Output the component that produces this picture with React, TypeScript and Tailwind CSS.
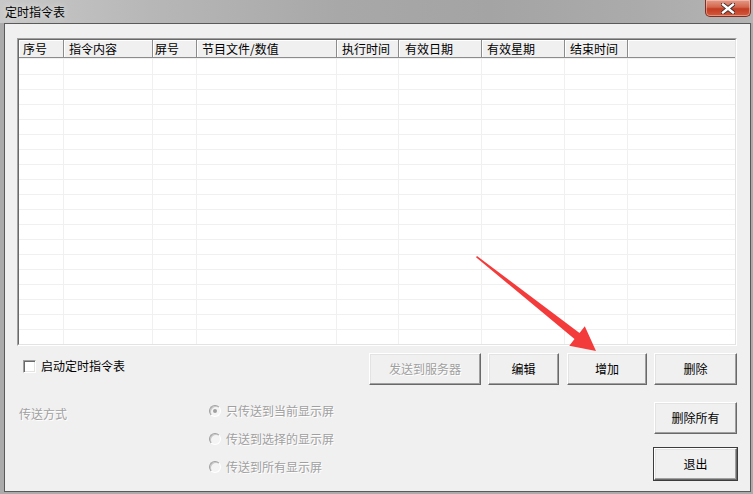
import type { ReactNode } from 'react';

// 定时指令表 dialog (classic Windows style)

const columns = [
  { label: '序号', w: 45, pl: 4 },
  { label: '指令内容', w: 89, pl: 5 },
  { label: '屏号', w: 44, pl: 2 },
  { label: '节目文件/数值', w: 140, pl: 5 },
  { label: '执行时间', w: 62, pl: 5 },
  { label: '有效日期', w: 83, pl: 6 },
  { label: '有效星期', w: 83, pl: 5 },
  { label: '结束时间', w: 63, pl: 5 },
];

const rows = Array.from({ length: 19 }, (_, i) => i);

function Btn({ children, disabled, className = '' }: { children: ReactNode; disabled?: boolean; className?: string }) {
  return (
    <div
      className={`flex items-center justify-center bg-[#f0f0f0] border border-t-white border-l-white border-r-[#696969] border-b-[#696969] shadow-[inset_-1px_-1px_0_#a0a0a0,inset_1px_1px_0_#e3e3e3] ${
        disabled ? 'text-[#a0a0a0] [text-shadow:1px_1px_0_#ffffff]' : 'text-black'
      } ${className}`}
    >
      {children}
    </div>
  );
}

function Radio({ checked, label }: { checked?: boolean; label: string }) {
  return (
    <div className="flex items-center h-[16px]">
      <div className="relative w-[12px] h-[12px] rounded-full bg-[#f4f4f4] border border-t-[#a0a0a0] border-l-[#a0a0a0] border-r-white border-b-white shadow-[inset_1px_1px_0_#c8c8c8]">
        {checked && <div className="absolute left-[3px] top-[3px] w-[4px] h-[4px] rounded-full bg-[#a0a0a0]" />}
      </div>
      <span className="ml-[5px] text-[#a0a0a0] [text-shadow:1px_1px_0_#ffffff]">{label}</span>
    </div>
  );
}

export default function App() {
  return (
    <div className="relative w-[753px] h-[494px] overflow-hidden flex flex-col bg-[#ababab] font-['Noto_Sans_CJK_SC',sans-serif] text-[12px] leading-[16px]">
      {/* 标题栏 */}
      <div className="h-[23px] shrink-0 flex items-start bg-[linear-gradient(90deg,#c8c8c8_0%,#b7b7b7_20%,#a8a8a8_45%,#a4a4a4_65%,#ababab_85%,#b4b4b4_100%)]">
        <span className="pl-[5px] pt-[4px] text-black [text-shadow:0_0_6px_rgba(255,255,255,0.8)]">定时指令表</span>
        <div className="ml-auto mr-[2px] w-[46px] h-[17px] flex items-center justify-center rounded-b-[5px] border border-t-0 border-[#7d2f25] bg-[linear-gradient(180deg,#e49a87_0%,#d3664d_45%,#c23c22_55%,#d35a3c_100%)] shadow-[inset_0_0_0_1px_rgba(255,220,210,0.45)]">
          <svg width="14" height="11" viewBox="0 0 14 11">
            <path d="M2 1.5 L12 9.5 M12 1.5 L2 9.5" stroke="#3c2a28" strokeWidth="4.2" strokeLinecap="square" />
            <path d="M2 1.5 L12 9.5 M12 1.5 L2 9.5" stroke="#ffffff" strokeWidth="2.4" strokeLinecap="square" />
          </svg>
        </div>
      </div>

      <div className="flex-1 flex pl-[4px] pr-[2px] pb-[2px]">
        <div className="flex-1 flex flex-col border border-[#5a5a5a] bg-[#f0f0f0] pl-[12px] pr-[13px] pt-[14px]">
          {/* 列表 */}
          <div className="w-[720px] h-[308px] shrink-0 border border-t-[#a0a0a0] border-l-[#a0a0a0] border-r-white border-b-white">
            <div className="w-full h-full flex flex-col overflow-hidden bg-white border border-t-[#696969] border-l-[#696969] border-r-[#e3e3e3] border-b-[#e3e3e3]">
              <div className="flex h-[18px] shrink-0 bg-[#f0f0f0]">
                {columns.map((c) => (
                  <div
                    key={c.label}
                    style={{ width: c.w, paddingLeft: c.pl }}
                    className="shrink-0 h-full border-r border-b border-r-[#8c8c8c] border-b-[#8c8c8c] shadow-[inset_1px_1px_0_#ffffff] text-black leading-[17px] whitespace-nowrap"
                  >
                    {c.label}
                  </div>
                ))}
                <div className="flex-1 h-full border-b border-b-[#8c8c8c] shadow-[inset_1px_1px_0_#ffffff]" />
              </div>
              <div className="flex-1 flex flex-col border-t border-[#f0f0f0]">
                {rows.map((r) => (
                  <div key={r} className={`flex shrink-0 border-b border-[#f0f0f0] ${r === 0 ? 'h-[16px]' : 'h-[15px]'}`}>
                    {columns.map((c) => (
                      <div key={c.label} style={{ width: c.w }} className="shrink-0 h-full border-r border-[#f0f0f0]" />
                    ))}
                    <div className="flex-1" />
                  </div>
                ))}
              </div>
            </div>
          </div>

          {/* 按钮行 */}
          <div className="flex h-[32px] mt-[7px] shrink-0">
            <div className="flex items-start pt-[7px] pl-[6px]">
              <div className="w-[13px] h-[13px] bg-white border border-t-[#a0a0a0] border-l-[#a0a0a0] border-r-white border-b-white shadow-[inset_1px_1px_0_#696969,inset_-1px_-1px_0_#e3e3e3]" />
              <span className="ml-[5px] -mt-[2px] text-black">启动定时指令表</span>
            </div>
            <div className="ml-auto flex">
              <Btn disabled className="w-[112px] h-[32px]">发送到服务器</Btn>
              <Btn className="w-[71px] h-[32px] ml-[7px]">编辑</Btn>
              <Btn className="w-[80px] h-[32px] ml-[8px]">增加</Btn>
              <Btn className="w-[83px] h-[32px] ml-[7px]">删除</Btn>
            </div>
          </div>

          {/* 传送方式 */}
          <div className="flex">
            <div className="w-[190px] pl-[2px] pt-[21px] text-[#a0a0a0] [text-shadow:1px_1px_0_#ffffff]">传送方式</div>
            <div className="ml-[2px] pt-[18px] flex flex-col gap-[12px]">
              <Radio checked label="只传送到当前显示屏" />
              <Radio label="传送到选择的显示屏" />
              <Radio label="传送到所有显示屏" />
            </div>
            <div className="ml-auto flex flex-col items-end">
              <Btn className="w-[83px] h-[32px] mt-[17px]">删除所有</Btn>
              <div className="mt-[13px] -mr-[1px] border border-[#3c3c3c]">
                <Btn className="w-[83px] h-[32px]">退出</Btn>
              </div>
            </div>
          </div>
        </div>
      </div>

      {/* 红色箭头标注 */}
      <svg className="absolute inset-0 pointer-events-none" width="753" height="494" viewBox="0 0 753 494">
        <polygon
          points="477,256 579.5,332.9 584.8,326.2 596,351 569.3,345.8 574.5,339.1 476,257.2"
          fill="#f43b3b"
        />
      </svg>
    </div>
  );
}
